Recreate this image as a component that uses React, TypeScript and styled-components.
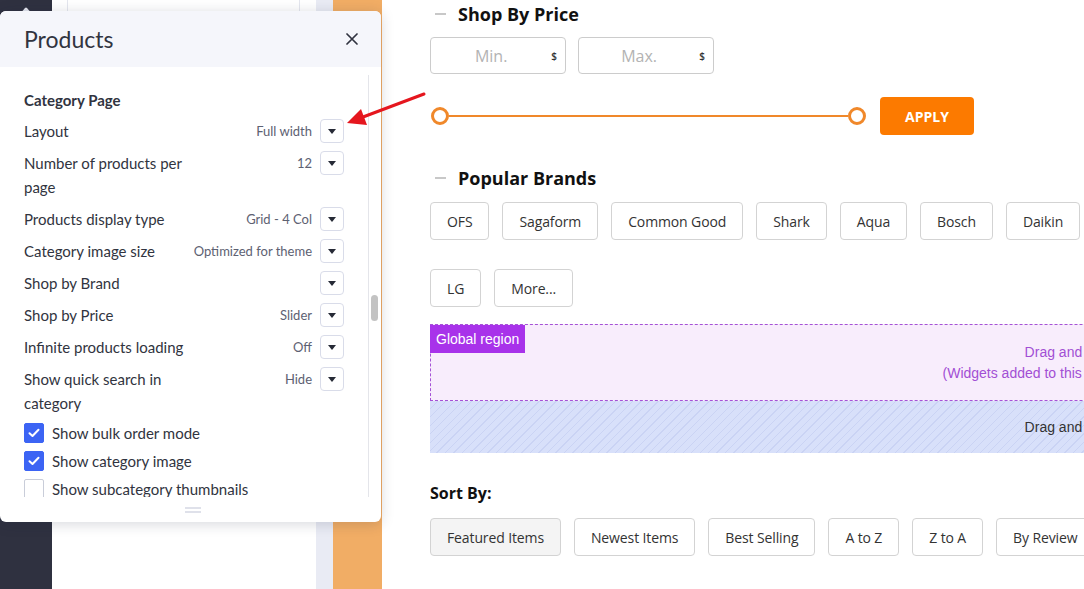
import React from "react";
import styled, { createGlobalStyle } from "styled-components";

const GlobalStyle = createGlobalStyle`
  html, body { margin: 0; padding: 0; }
  body { font-family: "Lato", "Noto Sans", sans-serif; overflow: hidden; background: #fff; }
  * { box-sizing: border-box; }
`;

const Page = styled.div`
  position: relative;
  display: flex;
  width: 1084px;
  height: 589px;
  overflow: hidden;
`;

const Rail = styled.div`
  width: 52px;
  flex: none;
  background: #2f3140;
  display: flex;
  justify-content: center;
  align-items: flex-start;
  padding-top: 5px;
`;

const Drawer = styled.div`
  width: 264px;
  flex: none;
  background: #fff;
  padding: 0 16px 0 15px;
`;

const DrawerCard = styled.div`
  height: 180px;
  border: 1px solid #e4e6ee;
  border-top: none;
`;

const Gutter = styled.div`
  width: 17px;
  flex: none;
  background: #e9ebf4;
`;

const Accent = styled.div`
  width: 49px;
  flex: none;
  background: #f1ad65;
`;

const Preview = styled.div`
  flex: 1;
  min-width: 0;
  overflow: hidden;
  background: #fff;
  font-family: "Open Sans", "Noto Sans", sans-serif;
  color: #333;
`;

const PreviewInner = styled.div`
  width: 1458px;
  padding: 2px 48px 0;
`;

const Heading = styled.div<{ $gap?: number }>`
  display: flex;
  align-items: center;
  margin-top: ${(p) => p.$gap ?? 0}px;
  font-size: 18px;
  font-weight: 700;
  line-height: 24px;
  color: #111;
`;

const HeadingDash = styled.span`
  display: block;
  width: 11px;
  height: 2px;
  background: #c8c8c8;
  margin: 0 12px 0 5px;
`;

const PriceInputs = styled.div`
  display: flex;
  gap: 12px;
  margin-top: 11px;
`;

const PriceBox = styled.div`
  width: 136px;
  height: 37px;
  border: 1px solid #cccccc;
  border-radius: 4px;
  display: flex;
  align-items: center;
  padding-right: 8px;
`;

const Placeholder = styled.span`
  flex: 1;
  text-align: center;
  font-size: 16px;
  color: #b3b3b3;
`;

const Currency = styled.span`
  font-size: 10px;
  font-weight: 600;
  color: #333;
`;

const SliderRow = styled.div`
  display: flex;
  align-items: center;
  gap: 14px;
  margin-top: 23px;
`;

const SliderTrack = styled.div`
  width: 436px;
  height: 38px;
  display: flex;
  align-items: center;
  padding-left: 1px;
`;

const SliderHandle = styled.span`
  width: 18px;
  height: 18px;
  flex: none;
  border-radius: 50%;
  border: 3px solid #f0882a;
  background: #fff;
`;

const SliderLine = styled.span`
  flex: 1;
  height: 2px;
  background: #f0882a;
`;

const ApplyButton = styled.button`
  width: 94px;
  height: 38px;
  border: none;
  border-radius: 4px;
  background: #fc7a00;
  color: #fff;
  font-family: "Open Sans", sans-serif;
  font-size: 14px;
  font-weight: 700;
  padding: 0;
`;

const ChipList = styled.div<{ $gap: number; $max?: number }>`
  display: flex;
  flex-wrap: wrap;
  gap: 29px 13px;
  margin-top: ${(p) => p.$gap}px;
  max-width: ${(p) => (p.$max ? `${p.$max}px` : "none")};
`;

const Chip = styled.button<{ $active?: boolean }>`
  height: 38px;
  padding: 0 16px;
  border: 1px solid #d3d3d3;
  border-radius: 4px;
  background: ${(p) => (p.$active ? "#f4f4f4" : "#fff")};
  color: #333;
  font-family: "Open Sans", sans-serif;
  font-size: 14px;
  letter-spacing: -0.12px;
  white-space: nowrap;
`;

const GlobalRegion = styled.div`
  position: relative;
  margin-top: 17px;
  height: 77px;
  border: 1px dashed #a552d6;
  background: #f8edfc;
  display: flex;
  flex-direction: column;
  justify-content: center;
  align-items: center;
  font-family: "Liberation Sans", Arial, sans-serif;
  font-size: 14px;
  line-height: 21px;
  color: #a24fd4;
`;

const RegionBadge = styled.span`
  position: absolute;
  top: 0;
  left: -1px;
  height: 28px;
  line-height: 28px;
  padding: 0 6px;
  background: #a832ea;
  color: #fff;
  font-size: 14px;
`;

const DropZone = styled.div`
  height: 52px;
  background-color: #d8e0fa;
  background-image: repeating-linear-gradient(
    135deg,
    transparent 0px,
    transparent 5px,
    #cad3f4 5px,
    #cad3f4 6px
  );
  display: flex;
  justify-content: center;
  align-items: center;
  font-family: "Liberation Sans", Arial, sans-serif;
  font-size: 14px;
  color: #333;
`;

const SortTitle = styled.div`
  margin-top: 28px;
  font-size: 16px;
  font-weight: 700;
  line-height: 24px;
  color: #111;
`;

/* ---------- Modal ---------- */

const Modal = styled.div`
  position: absolute;
  left: 0;
  top: 11px;
  width: 381px;
  height: 511px;
  background: #fff;
  border-radius: 6px;
  box-shadow: 0 2px 14px rgba(30, 35, 60, 0.18);
  display: flex;
  flex-direction: column;
  overflow: hidden;
  z-index: 2;
  color: #313440;
`;

const ModalHeader = styled.div`
  height: 56px;
  flex: none;
  background: #f5f6fb;
  display: flex;
  align-items: center;
  justify-content: space-between;
  padding: 0 23px 0 24px;
`;

const ModalTitle = styled.h2`
  margin: 0;
  font-size: 23px;
  font-weight: 400;
  color: #313440;
`;

const CloseButton = styled.button`
  width: 12px;
  height: 12px;
  padding: 0;
  border: none;
  background: none;
  display: flex;
`;

const ModalBody = styled.div`
  flex: 1;
  min-height: 0;
  display: flex;
`;

const ModalContent = styled.div`
  flex: 1;
  min-width: 0;
  overflow: hidden;
  padding: 21px 24px 0 24px;
`;

const ScrollTrack = styled.div`
  width: 13px;
  flex: none;
  margin: 8px 0 0;
  border-left: 1px solid #e4e5ea;
  padding: 220px 2px 0 2px;
`;

const ScrollThumb = styled.div`
  width: 7px;
  height: 26px;
  border-radius: 4px;
  background: #c3c3c3;
`;

const SectionTitle = styled.div`
  font-size: 15px;
  font-weight: 700;
  line-height: 24px;
  margin-bottom: 7px;
`;

const SettingRow = styled.div`
  display: flex;
  align-items: flex-start;
  margin-bottom: 8px;
`;

const SettingLabel = styled.span`
  max-width: 172px;
  margin-right: auto;
  font-size: 15px;
  line-height: 24px;
`;

const SettingValue = styled.span`
  font-size: 13px;
  line-height: 24px;
  color: #5d6172;
  margin: 0 8px 0 12px;
  white-space: nowrap;
`;

const DropButton = styled.span`
  width: 24px;
  height: 24px;
  flex: none;
  border: 1px solid #d9dce9;
  border-radius: 4px;
  display: flex;
  align-items: center;
  justify-content: center;
  &::after {
    content: "";
    border-left: 4px solid transparent;
    border-right: 4px solid transparent;
    border-top: 5px solid #262a36;
  }
`;

const CheckRow = styled.label`
  display: flex;
  align-items: center;
  gap: 8px;
  height: 20px;
  margin-bottom: 8px;
  font-size: 15px;
`;

const CheckBox = styled.span<{ $checked?: boolean }>`
  width: 20px;
  height: 20px;
  flex: none;
  border-radius: 2px;
  border: 1px solid ${(p) => (p.$checked ? "#3c64f4" : "#c9cdd9")};
  background: ${(p) => (p.$checked ? "#3c64f4" : "#fff")};
  display: flex;
  align-items: center;
  justify-content: center;
`;

const ModalFooter = styled.div`
  height: 25px;
  flex: none;
  display: flex;
  justify-content: center;
  align-items: center;
  padding-left: 5px;
`;

const Grip = styled.span`
  width: 16px;
  height: 6px;
  border-top: 2px solid #dfe1ea;
  border-bottom: 2px solid #dfe1ea;
`;

const Pointer = styled.svg`
  position: absolute;
  left: 340px;
  top: 85px;
  z-index: 3;
  pointer-events: none;
`;

const settings: { label: string; value: string }[] = [
  { label: "Layout", value: "Full width" },
  { label: "Number of products per page", value: "12" },
  { label: "Products display type", value: "Grid - 4 Col" },
  { label: "Category image size", value: "Optimized for theme" },
  { label: "Shop by Brand", value: "" },
  { label: "Shop by Price", value: "Slider" },
  { label: "Infinite products loading", value: "Off" },
  { label: "Show quick search in category", value: "Hide" },
];

const checks = [
  { label: "Show bulk order mode", checked: true },
  { label: "Show category image", checked: true },
  { label: "Show subcategory thumbnails", checked: false },
];

const brands = ["OFS", "Sagaform", "Common Good", "Shark", "Aqua", "Bosch", "Daikin", "LG", "More..."];
const sorts = ["Featured Items", "Newest Items", "Best Selling", "A to Z", "Z to A", "By Review"];

export default function App() {
  return (
    <>
      <GlobalStyle />
      <Page>
        <Rail>
          <svg width="16" height="10" viewBox="0 0 16 10">
            <path d="M1 10 L7 3 Q8 2 9 3 L15 10 Z" fill="#e3e5ee" />
          </svg>
        </Rail>
        <Drawer>
          <DrawerCard />
        </Drawer>
        <Gutter />
        <Accent />
        <Preview>
          <PreviewInner>
            <Heading>
              <HeadingDash />
              Shop By Price
            </Heading>
            <PriceInputs>
              <PriceBox>
                <Placeholder>Min.</Placeholder>
                <Currency>$</Currency>
              </PriceBox>
              <PriceBox>
                <Placeholder>Max.</Placeholder>
                <Currency>$</Currency>
              </PriceBox>
            </PriceInputs>
            <SliderRow>
              <SliderTrack>
                <SliderHandle />
                <SliderLine />
                <SliderHandle />
              </SliderTrack>
              <ApplyButton>APPLY</ApplyButton>
            </SliderRow>

            <Heading $gap={31}>
              <HeadingDash />
              Popular Brands
            </Heading>
            <ChipList $gap={12} $max={680}>
              {brands.map((b) => (
                <Chip key={b}>{b}</Chip>
              ))}
            </ChipList>

            <GlobalRegion>
              <RegionBadge>Global region</RegionBadge>
              <span>Drag and drop widgets here</span>
              <span>(Widgets added to this region will appear on all pages)</span>
            </GlobalRegion>
            <DropZone>Drag and drop widgets here</DropZone>

            <SortTitle>Sort By:</SortTitle>
            <ChipList $gap={13}>
              {sorts.map((s, i) => (
                <Chip key={s} $active={i === 0}>
                  {s}
                </Chip>
              ))}
            </ChipList>
          </PreviewInner>
        </Preview>

        <Modal>
          <ModalHeader>
            <ModalTitle>Products</ModalTitle>
            <CloseButton aria-label="Close">
              <svg width="12" height="12" viewBox="0 0 12 12">
                <path d="M1 1 L11 11 M11 1 L1 11" stroke="#313440" strokeWidth="1.7" strokeLinecap="round" />
              </svg>
            </CloseButton>
          </ModalHeader>
          <ModalBody>
            <ModalContent>
              <SectionTitle>Category Page</SectionTitle>
              {settings.map((s) => (
                <SettingRow key={s.label}>
                  <SettingLabel>{s.label}</SettingLabel>
                  <SettingValue>{s.value}</SettingValue>
                  <DropButton />
                </SettingRow>
              ))}
              {checks.map((c) => (
                <CheckRow key={c.label}>
                  <CheckBox $checked={c.checked}>
                    {c.checked && (
                      <svg width="12" height="10" viewBox="0 0 12 10">
                        <path d="M1.5 5.2 L4.5 8 L10.5 1.8" stroke="#fff" strokeWidth="2" fill="none" strokeLinecap="round" strokeLinejoin="round" />
                      </svg>
                    )}
                  </CheckBox>
                  {c.label}
                </CheckRow>
              ))}
            </ModalContent>
            <ScrollTrack>
              <ScrollThumb />
            </ScrollTrack>
          </ModalBody>
          <ModalFooter>
            <Grip />
          </ModalFooter>
        </Modal>

        <Pointer width="90" height="48" viewBox="0 0 90 48">
          <line x1="84" y1="9" x2="23" y2="32" stroke="#e5161e" strokeWidth="3" strokeLinecap="round" />
          <polygon points="7,38 21,24 27,40" fill="#e5161e" />
        </Pointer>
      </Page>
    </>
  );
}
